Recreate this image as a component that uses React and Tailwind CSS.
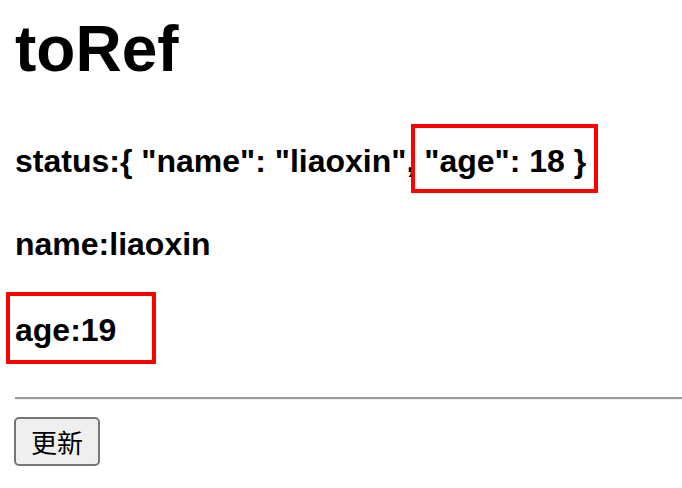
export default function App() {
  return (
    <div className="relative w-[682px] h-[488px] overflow-hidden bg-white text-black font-['Liberation_Sans',Arial,sans-serif]">
      <div className="pl-[15px] pt-[17px]">
        <h1 className="text-[64px] leading-none font-bold">toRef</h1>
        <h3 className="mt-[64px] text-[32px] leading-none font-bold whitespace-nowrap">
          status:{'{'} "name": "liaoxin", "age": 18 {'}'}
        </h3>
        <h3 className="mt-[51px] text-[32px] leading-none font-bold">name:liaoxin</h3>
        <h3 className="mt-[54px] text-[32px] leading-none font-bold">age:19</h3>
        <div className="mt-[51px] h-[3px] border-t-2 border-b border-t-[#9a9a9a] border-b-[#eeeeee]" />
        <button
          type="button"
          className="mt-[17px] w-[86px] h-[49px] rounded-[5px] border-2 border-[#767676] bg-[#efefef] text-[26px] leading-none font-['Noto_Sans_CJK_SC',sans-serif] -ml-px"
        >
          更新
        </button>
      </div>

      {/* annotation boxes */}
      <div className="absolute left-[411px] top-[124px] w-[187px] h-[69px] border-4 border-[#ff0000]" />
      <div className="absolute left-[6px] top-[292px] w-[150px] h-[72px] border-4 border-[#ff0000]" />
    </div>
  );
}
